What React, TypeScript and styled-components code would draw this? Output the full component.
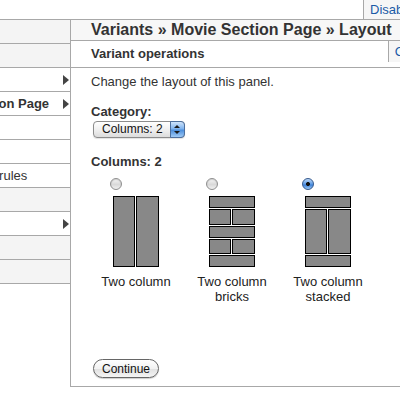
import React from 'react'
import styled, { createGlobalStyle } from 'styled-components'

const GlobalStyle = createGlobalStyle`
    html, body {
        margin: 0;
        padding: 0;
        background: #fff;
        overflow: hidden;
    }
    body {
        width: 400px;
        height: 400px;
        font-family: "Liberation Sans", Arial, sans-serif;
        color: #333;
    }
`

// the page is scrolled sideways: only the right edge of the sidebar shows
const PAGE = styled.div`
    width: 600px;
    margin-left: -130px;
`

const TOPBAR = styled.div`
    display: flex;
    justify-content: flex-end;
    height: 19px;
    border-bottom: 1px solid #a8a8a8;
`

const TAB = styled.a<{ $tall?: boolean }>`
    display: flex;
    align-items: center;
    height: ${props => props.$tall ? '19px' : '21px'};
    padding: 0 6px;
    border-left: 1px solid #a8a8a8;
    background: #f6f6f6;
    color: #1a5aa6;
    font-size: 13px;
    text-decoration: none;
    white-space: nowrap;
`

const BODY = styled.div`
    display: flex;
    align-items: stretch;
`

const SIDEBAR = styled.ul`
    flex: 0 0 200px;
    margin: 0;
    padding: 0;
    list-style: none;
`

const NAVITEM = styled.li<{ $depth: number; $shade?: boolean; $bold?: boolean; $link?: boolean }>`
    display: flex;
    align-items: center;
    height: 23px;
    padding-left: ${props => 42 + props.$depth * 15}px;
    padding-right: 1px;
    border-bottom: 1px solid #a8a8a8;
    background: ${props => props.$shade ? '#f4f4f4' : '#fff'};
    font-size: 13px;
    font-weight: ${props => props.$bold ? 'bold' : 'normal'};
    color: ${props => props.$link ? '#1a5aa6' : '#333'};
    white-space: nowrap;
`

const ARROW = styled.span`
    margin-left: auto;
    width: 0;
    height: 0;
    border-left: 6px solid #444;
    border-top: 5px solid transparent;
    border-bottom: 5px solid transparent;
`

const PANEL = styled.div`
    flex: 1;
    border-left: 1px solid #a8a8a8;
    border-bottom: 1px solid #a8a8a8;
`

const TITLE = styled.h1`
    margin: 0;
    height: 20px;
    padding-left: 20px;
    line-height: 20px;
    background: #f7f7f7;
    border-bottom: 1px solid #a8a8a8;
    font-size: 16px;
    font-weight: bold;
    color: #333;
    white-space: nowrap;
`

const OPERATIONS = styled.div`
    display: flex;
    align-items: flex-start;
    height: 26px;
    border-bottom: 1px solid #a8a8a8;
`

const OPTITLE = styled.h2`
    margin: 0;
    padding-left: 20px;
    line-height: 26px;
    font-size: 13px;
    font-weight: bold;
    color: #333;
`

const OPTABS = styled.div`
    display: flex;
    margin-left: auto;
`

const CONTENT = styled.div`
    padding: 6px 0 8px 20px;
    font-size: 13px;
    line-height: 15px;
`

const TEXT = styled.p`
    margin: 0;
`

const LABEL = styled.div<{ $gap: number }>`
    margin-top: ${props => props.$gap}px;
    font-weight: bold;
`

const SELECTWRAP = styled.div`
    position: relative;
    display: inline-block;
    margin: 2px 0 0 2px;
`

const SELECT = styled.select`
    appearance: none;
    width: 92px;
    height: 17px;
    margin: 0;
    padding: 0 0 0 8px;
    border: 1px solid #8c8c8c;
    border-radius: 4px;
    background: linear-gradient(#ffffff, #f0f0f0 50%, #dcdcdc);
    font-family: "Liberation Sans", Arial, sans-serif;
    font-size: 12px;
    line-height: 15px;
    color: #111;
    box-shadow: 0 1px 1px rgba(0, 0, 0, 0.12);
`

// blue up/down stepper drawn over the select's right end
const STEPPER = styled.span`
    position: absolute;
    top: 0;
    right: 0;
    width: 15px;
    height: 17px;
    box-sizing: border-box;
    border: 1px solid #4c6f9e;
    border-radius: 0 4px 4px 0;
    background: linear-gradient(#cfe4fb, #7fb3ee 45%, #4d8fdc 55%, #9fcaf6);
    pointer-events: none;
`

const STEPARROW = styled.span<{ $down?: boolean }>`
    position: absolute;
    left: 3px;
    ${props => props.$down ? 'bottom: 3px;' : 'top: 3px;'}
    width: 0;
    height: 0;
    border-left: 3px solid transparent;
    border-right: 3px solid transparent;
    ${props => props.$down ? 'border-top: 3px solid #1a1a1a;' : 'border-bottom: 3px solid #1a1a1a;'}
`

const CHOICES = styled.div`
    display: flex;
    gap: 6px;
    margin-top: 9px;
`

const CHOICE = styled.label`
    display: flex;
    flex-direction: column;
    width: 90px;
`

const RADIO = styled.input.attrs({ type: 'radio' })`
    appearance: none;
    width: 12px;
    height: 12px;
    margin: 0 0 0 19px;
    box-sizing: border-box;
    border: 1px solid #8e8e8e;
    border-radius: 50%;
    background: linear-gradient(#f6f6f6, #d9d9d9 55%, #f0f0f0);
    box-shadow: inset 0 1px 1px rgba(0, 0, 0, 0.15);

    &:checked {
        border-color: #35598d;
        background:
            radial-gradient(circle, #111 0 1.6px, transparent 2.3px),
            linear-gradient(#bcd8f8, #5e9be4 50%, #3c7fd6 60%, #9ccaf5);
        box-shadow: none;
    }
`

const PICTURE = styled.svg`
    display: block;
    align-self: center;
    width: 46px;
    height: 71px;
    margin-top: 6px;
`

const CAPTION = styled.span`
    margin-top: 7px;
    text-align: center;
    color: #222;
`

const BUTTON = styled.button`
    display: block;
    height: 19px;
    margin: 55px 0 0 2px;
    padding: 0 8px;
    border: 1px solid #666;
    border-radius: 10px;
    background: linear-gradient(#ffffff, #f2f2f2 50%, #e0e0e0 51%, #f4f4f4);
    font-family: "Liberation Sans", Arial, sans-serif;
    font-size: 12px;
    color: #111;
    box-shadow: 0 1px 1px rgba(0, 0, 0, 0.2);
`

// [x0, y0, x1, y1] pixel ranges of the boxes in each layout picture
type Box = [number, number, number, number]

const LAYOUTS: { name: string; boxes: Box[]; checked?: boolean }[] = [
    {
        name: 'Two column',
        boxes: [[0, 0, 21, 70], [23, 0, 45, 70]],
    },
    {
        name: 'Two column bricks',
        boxes: [
            [0, 0, 45, 11],
            [0, 13, 21, 28], [23, 13, 45, 28],
            [0, 30, 45, 41],
            [0, 43, 21, 57], [23, 43, 45, 57],
            [0, 59, 45, 70],
        ],
    },
    {
        name: 'Two column stacked',
        boxes: [
            [0, 0, 45, 11],
            [0, 13, 21, 57], [23, 13, 45, 57],
            [0, 59, 45, 70],
        ],
        checked: true,
    },
]

const NAV = [
    { label: 'Summary', depth: 0, shade: true },
    { label: 'Settings', depth: 0, shade: true },
    { label: 'Variants', depth: 0, arrow: true },
    { label: 'Movie Section Page', depth: 1, bold: true, arrow: true },
    { label: 'Summary', depth: 2, link: true },
    { label: 'General', depth: 2 },
    { label: 'Selection rules', depth: 2 },
    { label: 'Contexts', depth: 2, shade: true },
    { label: 'Content', depth: 2, arrow: true },
    { label: 'Add variant', depth: 0, shade: true },
    { label: 'Import variant', depth: 0, shade: true },
]

export default function App() {
    return (
        <>
            <GlobalStyle />
            <PAGE>
                <TOPBAR>
                    <TAB $tall href="#">Disable</TAB>
                    <TAB $tall href="#">Delete</TAB>
                </TOPBAR>
                <BODY>
                    <SIDEBAR>
                        {NAV.map((item, i) => (
                            <NAVITEM key={i} $depth={item.depth} $shade={item.shade} $bold={item.bold} $link={item.link}>
                                {item.label}
                                {item.arrow && <ARROW />}
                            </NAVITEM>
                        ))}
                    </SIDEBAR>
                    <PANEL>
                        <TITLE>Variants » Movie Section Page » Layout</TITLE>
                        <OPERATIONS>
                            <OPTITLE>Variant operations</OPTITLE>
                            <OPTABS>
                                <TAB href="#">Clone</TAB>
                                <TAB href="#">Edit</TAB>
                            </OPTABS>
                        </OPERATIONS>
                        <CONTENT>
                            <TEXT>Change the layout of this panel.</TEXT>
                            <LABEL $gap={15}>Category:</LABEL>
                            <SELECTWRAP>
                                <SELECT defaultValue="columns-2">
                                    <option value="columns-1">Columns: 1</option>
                                    <option value="columns-2">Columns: 2</option>
                                    <option value="columns-3">Columns: 3</option>
                                </SELECT>
                                <STEPPER>
                                    <STEPARROW />
                                    <STEPARROW $down />
                                </STEPPER>
                            </SELECTWRAP>
                            <LABEL $gap={16}>Columns: 2</LABEL>
                            <CHOICES>
                                {LAYOUTS.map(layout => (
                                    <CHOICE key={layout.name}>
                                        <RADIO name="layout" defaultChecked={layout.checked} />
                                        <PICTURE viewBox="0 0 46 71">
                                            {layout.boxes.map(([x0, y0, x1, y1], i) => (
                                                <rect key={i} x={x0 + 0.5} y={y0 + 0.5} width={x1 - x0} height={y1 - y0}
                                                    fill="#888" stroke="#000" strokeWidth={1} />
                                            ))}
                                        </PICTURE>
                                        <CAPTION>{layout.name}</CAPTION>
                                    </CHOICE>
                                ))}
                            </CHOICES>
                            <BUTTON type="button">Continue</BUTTON>
                        </CONTENT>
                    </PANEL>
                </BODY>
            </PAGE>
        </>
    )
}
